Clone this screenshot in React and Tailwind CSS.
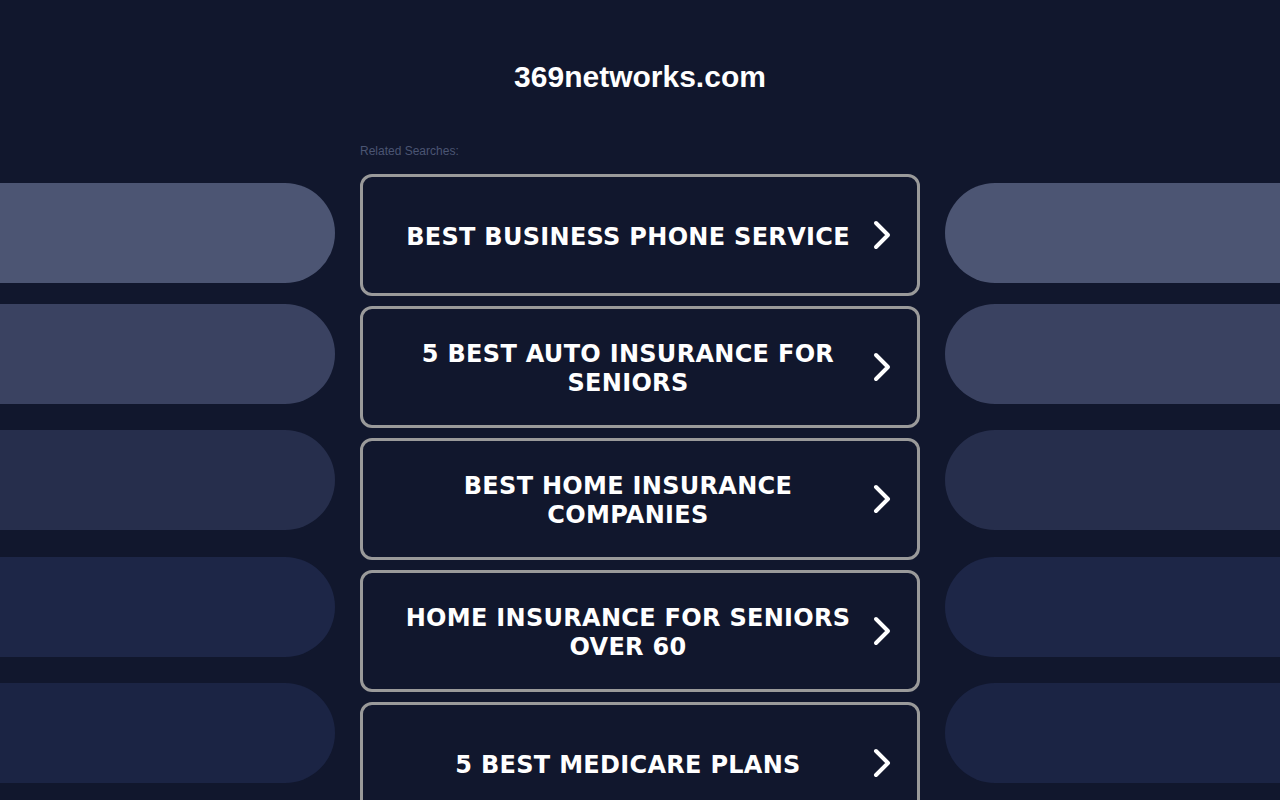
export default function App() {
  const searches = [
    'BEST BUSINESS PHONE SERVICE',
    '5 BEST AUTO INSURANCE FOR SENIORS',
    'BEST HOME INSURANCE COMPANIES',
    'HOME INSURANCE FOR SENIORS OVER 60',
    '5 BEST MEDICARE PLANS',
  ];

  const pills = [
    { color: 'bg-[#4c5573]', mt: 'mt-0' },
    { color: 'bg-[#3a4261]', mt: 'mt-[21px]' },
    { color: 'bg-[#262e4c]', mt: 'mt-[26px]' },
    { color: 'bg-[#1d2647]', mt: 'mt-[27px]' },
    { color: 'bg-[#1b2444]', mt: 'mt-[26px]' },
  ];

  return (
    <div className="min-h-screen h-[800px] overflow-hidden bg-[#11172d] font-['Liberation_Sans',Arial,sans-serif]">
      <h1 className="pt-[60px] text-center text-[30px] leading-[34px] font-bold text-white">
        369networks.com
      </h1>

      <div className="mt-[46px] grid grid-cols-[1fr_560px_1fr] gap-x-[25px]">
        <div className="flex flex-col pt-[43px]">
          {pills.map((p, i) => (
            <div key={i} className={`${p.mt} h-[100px] rounded-r-full ${p.color}`} />
          ))}
        </div>

        <div className="flex flex-col">
          <p className="text-[12px] leading-[14px] pt-[4px] text-[#4b5573]">Related Searches:</p>
          <div className="mt-[16px] flex flex-col gap-[10px]">
            {searches.map((s) => (
              <a
                key={s}
                href="#"
                className="flex h-[122px] items-center rounded-[12px] border-[3px] border-[#9a9a9a] px-[23px]"
              >
                <span className="mt-[4px] flex-1 text-center font-['DejaVu_Sans',Verdana,sans-serif] text-[24px] leading-[29px] tracking-[0.3px] font-bold text-white">
                  {s}
                </span>
                <svg width="24" height="30" viewBox="0 0 24 30" fill="none" className="shrink-0">
                  <path d="M6 3 L18 15 L6 27" stroke="white" strokeWidth="4" strokeLinecap="round" strokeLinejoin="round" />
                </svg>
              </a>
            ))}
          </div>
        </div>

        <div className="flex flex-col pt-[43px]">
          {pills.map((p, i) => (
            <div key={i} className={`${p.mt} h-[100px] rounded-l-full ${p.color}`} />
          ))}
        </div>
      </div>
    </div>
  );
}
